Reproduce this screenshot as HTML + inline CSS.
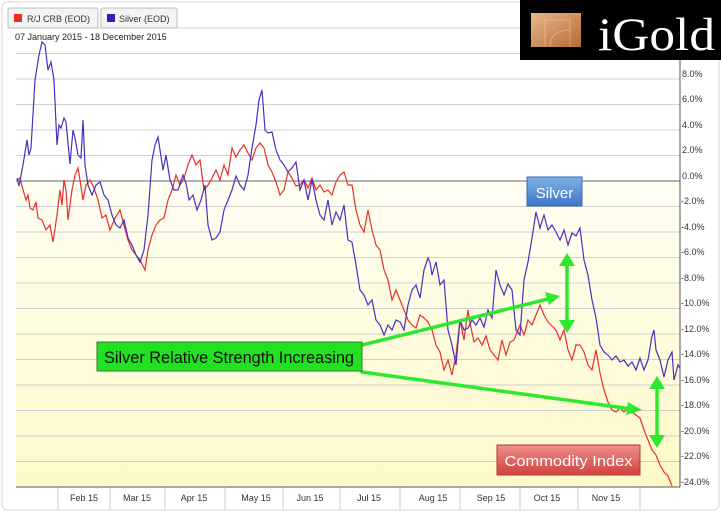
<!DOCTYPE html>
<html><head><meta charset="utf-8"><style>
body{margin:0;width:721px;height:512px;overflow:hidden;background:#fff;font-family:"Liberation Sans",sans-serif}
</style></head><body>
<svg width="721" height="512" xmlns="http://www.w3.org/2000/svg" style="position:absolute;left:0;top:0">
<defs>
<linearGradient id="yb" x1="0" y1="0" x2="0" y2="1"><stop offset="0" stop-color="#fffff3"/><stop offset="1" stop-color="#fdf9c8"/></linearGradient>
<linearGradient id="bl" x1="0" y1="0" x2="0" y2="1"><stop offset="0" stop-color="#7fb0ea"/><stop offset="1" stop-color="#3f78c8"/></linearGradient>
<linearGradient id="rd" x1="0" y1="0" x2="0" y2="1"><stop offset="0" stop-color="#f08f8a"/><stop offset="1" stop-color="#d0423c"/></linearGradient>
<linearGradient id="gs" x1="0" y1="0" x2="1" y2="1"><stop offset="0" stop-color="#e9b88a"/><stop offset="1" stop-color="#b56a36"/></linearGradient>
</defs>
<rect x="2" y="2" width="717" height="508" rx="6" fill="#fff" stroke="#d4d4d4"/>
<rect x="16" y="181" width="664" height="306" fill="url(#yb)"/>
<g stroke="#cfcfcf" stroke-width="1">
<line x1="16" x2="680" y1="28" y2="28"/><line x1="16" x2="680" y1="53.5" y2="53.5"/><line x1="16" x2="680" y1="79" y2="79"/><line x1="16" x2="680" y1="104.5" y2="104.5"/><line x1="16" x2="680" y1="130" y2="130"/><line x1="16" x2="680" y1="155.5" y2="155.5"/>
<line x1="16" x2="680" y1="206.5" y2="206.5"/><line x1="16" x2="680" y1="232" y2="232"/><line x1="16" x2="680" y1="257.5" y2="257.5"/><line x1="16" x2="680" y1="283" y2="283"/><line x1="16" x2="680" y1="308.5" y2="308.5"/><line x1="16" x2="680" y1="334" y2="334"/><line x1="16" x2="680" y1="359.5" y2="359.5"/><line x1="16" x2="680" y1="385" y2="385"/><line x1="16" x2="680" y1="410.5" y2="410.5"/><line x1="16" x2="680" y1="436" y2="436"/><line x1="16" x2="680" y1="461.5" y2="461.5"/>
</g>
<line x1="16" x2="680" y1="181" y2="181" stroke="#666"/>
<line x1="16" x2="680" y1="487" y2="487" stroke="#555"/>
<line x1="680" x2="680" y1="20" y2="487" stroke="#555"/>
<g stroke="#ccc"><line x1="58" x2="58" y1="487" y2="510"/><line x1="110" x2="110" y1="487" y2="510"/><line x1="165" x2="165" y1="487" y2="510"/><line x1="225" x2="225" y1="487" y2="510"/><line x1="283" x2="283" y1="487" y2="510"/><line x1="340" x2="340" y1="487" y2="510"/><line x1="400" x2="400" y1="487" y2="510"/><line x1="460" x2="460" y1="487" y2="510"/><line x1="520" x2="520" y1="487" y2="510"/><line x1="578" x2="578" y1="487" y2="510"/><line x1="640" x2="640" y1="487" y2="510"/></g>
<g font-size="9" fill="#333" text-anchor="middle">
<text x="84" y="501">Feb 15</text><text x="137" y="501">Mar 15</text><text x="194" y="501">Apr 15</text><text x="256" y="501">May 15</text><text x="310" y="501">Jun 15</text><text x="369" y="501">Jul 15</text><text x="433" y="501">Aug 15</text><text x="491" y="501">Sep 15</text><text x="547" y="501">Oct 15</text><text x="606" y="501">Nov 15</text>
</g>
<g font-size="9" fill="#333">
<text x="682" y="77">8.0%</text><text x="682" y="102">6.0%</text><text x="682" y="128">4.0%</text><text x="682" y="153">2.0%</text><text x="682" y="179">0.0%</text>
<text x="681" y="204">-2.0%</text><text x="681" y="230">-4.0%</text><text x="681" y="255">-6.0%</text><text x="681" y="281">-8.0%</text><text x="681" y="306">-10.0%</text><text x="681" y="332">-12.0%</text><text x="681" y="357">-14.0%</text><text x="681" y="383">-16.0%</text><text x="681" y="408">-18.0%</text><text x="681" y="434">-20.0%</text><text x="681" y="459">-22.0%</text><text x="681" y="485">-24.0%</text>
</g>
<polyline fill="none" stroke="#e8302a" stroke-width="1.2" points="17,180 20,178 22,186 26,200 28,195 30,208 33,210 36,202 38,218 42,220 46,230 50,225 53,242 57,215 60,190 62,205 64,180 66,190 68,220 72,190 75,175 78,168 80,180 83,200 86,185 90,180 94,188 98,200 102,218 106,215 110,230 115,218 120,210 124,225 128,240 132,250 136,255 140,260 145,270 148,250 152,235 156,225 160,220 164,218 168,200 172,190 176,175 180,185 184,178 188,165 192,155 196,165 200,160 204,190 208,185 212,178 216,170 220,180 224,165 228,175 232,148 236,157 240,150 244,145 248,153 252,160 256,148 260,143 264,148 268,165 272,172 276,182 280,195 284,190 288,172 292,178 296,186 300,185 304,180 308,188 312,178 316,190 320,185 324,192 328,190 332,195 336,182 340,175 344,172 348,185 352,185 356,210 360,225 364,232 368,210 372,230 376,245 380,250 384,270 388,280 392,300 396,290 400,300 404,310 408,320 412,325 416,328 420,315 424,318 428,322 432,330 436,345 440,352 444,370 448,360 452,375 456,355 460,320 464,340 468,310 470,323 474,342 478,338 482,345 486,336 490,350 494,355 498,360 502,340 506,355 510,342 514,340 518,330 520,325 524,335 528,320 532,325 536,315 540,305 544,315 548,322 552,326 556,330 560,340 564,330 568,350 572,360 576,345 580,345 584,352 588,365 592,370 596,350 600,373 604,390 608,402 612,410 616,412 620,408 624,412 628,408 632,412 636,415 640,418 644,430 648,440 652,450 656,455 660,465 664,472 668,476 672,486"/>
<polyline fill="none" stroke="#4a2fc0" stroke-width="1.2" points="17,178 19,186 23,165 27,140 29,155 31,148 35,80 39,55 42,42 45,45 48,70 51,62 54,80 57,145 59,125 61,128 64,118 66,122 70,164 73,130 75,138 78,155 81,158 83,120 85,165 88,185 92,195 96,185 100,182 104,195 108,200 112,215 116,225 120,228 124,220 128,238 132,245 136,255 140,262 144,250 148,215 152,160 155,145 158,137 160,150 163,170 166,155 170,180 174,190 178,190 183,175 186,183 189,200 193,195 197,210 201,200 205,185 208,225 212,240 216,238 220,232 224,210 228,200 232,190 236,176 240,185 244,190 248,175 252,148 256,125 259,100 262,90 265,130 268,133 272,132 276,150 280,160 284,165 288,172 292,168 296,162 300,190 304,180 308,200 312,180 316,200 320,215 324,220 328,200 332,225 336,212 340,220 344,205 348,240 352,242 356,265 360,290 364,295 368,305 372,300 376,320 380,325 384,335 388,325 392,330 396,320 400,322 404,330 408,305 412,290 416,285 420,298 424,270 428,258 430,262 432,275 436,262 440,285 444,280 448,330 452,345 456,365 460,320 464,330 468,328 472,320 476,325 480,318 484,327 488,310 492,318 496,270 500,285 504,295 508,284 512,290 516,330 520,335 524,280 528,262 532,238 536,212 540,228 544,215 548,230 552,225 556,232 560,240 564,230 568,245 572,233 576,236 580,228 584,260 588,275 592,300 596,318 600,345 604,352 608,355 612,360 616,356 620,362 624,360 628,366 632,362 636,370 640,358 644,370 648,360 652,336 654,330 656,350 660,360 664,377 668,360 672,352 674,380 678,365 680,368"/>
<g stroke="#2ee82e" stroke-width="3.5" fill="none" stroke-linecap="round">
<line x1="362" y1="345" x2="552" y2="298"/>
<line x1="362" y1="372" x2="632" y2="409"/>
<line x1="567" y1="262" x2="567" y2="325"/>
<line x1="657" y1="385" x2="657" y2="440"/>
</g>
<g fill="#2ee82e">
<polygon points="560,296 545,292 549,305"/>
<polygon points="642,410 628,402 626,415"/>
<polygon points="567,253 559,266 575,266"/>
<polygon points="567,333 559,320 575,320"/>
<polygon points="657,376 649,389 665,389"/>
<polygon points="657,448 649,435 665,435"/>
</g>
<rect x="97" y="342" width="265" height="29" fill="#22e022" stroke="#3a7a2a"/>
<text x="104" y="363" font-size="17" fill="#111" textLength="250" lengthAdjust="spacingAndGlyphs">Silver Relative Strength Increasing</text>
<rect x="527" y="177" width="55" height="29" fill="url(#bl)" stroke="#3a6ab0"/>
<text x="554.5" y="198" font-size="15" fill="#fff" text-anchor="middle">Silver</text>
<rect x="497" y="445" width="143" height="30" fill="url(#rd)" stroke="#b03a35"/>
<text x="568.5" y="466" font-size="15" fill="#fff" text-anchor="middle" textLength="128" lengthAdjust="spacingAndGlyphs">Commodity Index</text>
<rect x="8" y="8" width="90" height="20" rx="2" fill="#f4f4f4" stroke="#bbb"/>
<rect x="14" y="14" width="8" height="8" fill="#e8302a"/>
<text x="27" y="22" font-size="9" fill="#333">R/J CRB (EOD)</text>
<rect x="101" y="8" width="76" height="20" rx="2" fill="#f4f4f4" stroke="#bbb"/>
<rect x="107" y="14" width="8" height="8" fill="#3020c0"/>
<text x="119" y="22" font-size="9" fill="#333">Silver (EOD)</text>
<text x="15" y="40" font-size="9" fill="#222">07 January 2015 - 18 December 2015</text>
<rect x="520" y="0" width="201" height="60" fill="#000"/>
<rect x="531" y="13" width="50" height="34" fill="url(#gs)"/>
<path d="M545,47 V20 H570 V47 M570,30 Q550,30 550,47" fill="none" stroke="#f6d3a8" stroke-width="0.8" opacity="0.6"/>
<text x="598" y="50" font-family="Liberation Serif,serif" font-size="47" fill="#fff" textLength="117" lengthAdjust="spacingAndGlyphs">iGold</text>
</svg>
</body></html>
